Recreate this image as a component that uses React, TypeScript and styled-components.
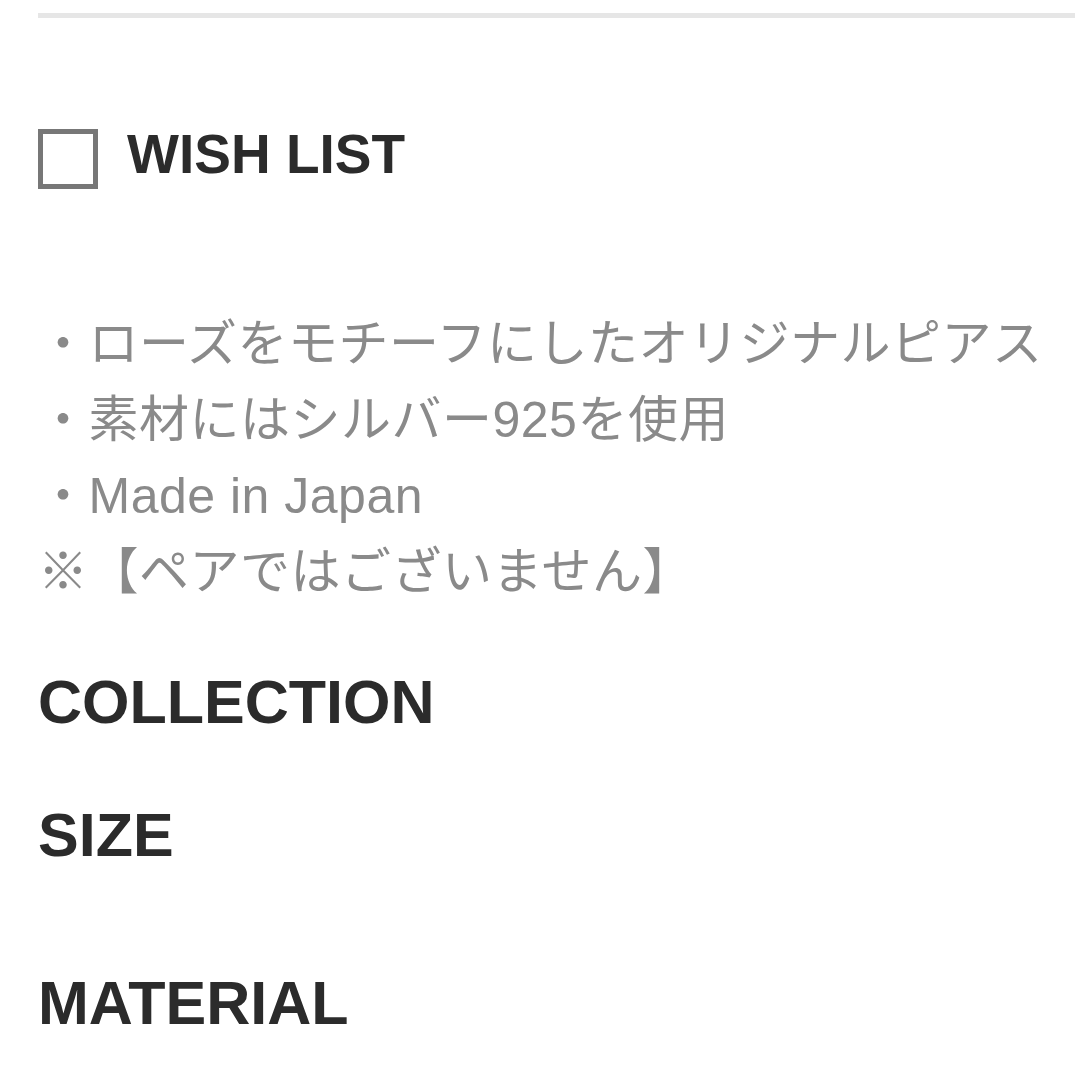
import React from "react";
import styled, { createGlobalStyle } from "styled-components";

const GlobalStyle = createGlobalStyle`
  html, body {
    margin: 0;
    padding: 0;
    background: #ffffff;
  }
  body {
    font-family: "Liberation Sans", "Noto Sans CJK JP", sans-serif;
  }
`;

const Page = styled.main`
  padding: 13px 5px 0 38px;
  display: flex;
  flex-direction: column;
`;

const Divider = styled.hr`
  margin: 0;
  border: none;
  height: 5px;
  background: #e6e6e6;
`;

const WishRow = styled.label`
  margin-top: 109px;
  display: flex;
  align-items: center;
  gap: 29px;
  cursor: pointer;
`;

const CheckBox = styled.span`
  width: 60px;
  height: 60px;
  box-sizing: border-box;
  border: 5px solid #777777;
  background: #ffffff;
  flex: none;
`;

const WishLabel = styled.span`
  font-family: "Liberation Sans", Arial, sans-serif;
  font-weight: 700;
  font-size: 55px;
  line-height: 55px;
  color: #2b2b2b;
  margin-bottom: 8px;
`;

const Description = styled.div`
  margin-top: 116px;
  display: flex;
  flex-direction: column;
`;

const DescLine = styled.p`
  margin: 0;
  font-family: "Liberation Sans", "Noto Sans CJK JP", sans-serif;
  font-size: 50px;
  line-height: 76px;
  letter-spacing: 0.5px;
  color: #8a8a8a;
  white-space: nowrap;
`;

const Heading = styled.h3<{ $gap: number }>`
  margin: ${(p) => p.$gap}px 0 0 0;
  font-family: "Liberation Sans", Arial, sans-serif;
  font-weight: 700;
  font-size: 61px;
  line-height: 60px;
  color: #2b2b2b;
`;

const lines = [
  "・ローズをモチーフにしたオリジナルピアス",
  "・素材にはシルバー925を使用",
  "・Made in Japan",
  "※【ペアではございません】",
];

export default function App() {
  return (
    <>
      <GlobalStyle />
      <Page>
        <Divider />
        <WishRow>
          <CheckBox />
          <WishLabel>WISH LIST</WishLabel>
        </WishRow>
        <Description>
          {lines.map((l) => (
            <DescLine key={l}>{l}</DescLine>
          ))}
        </Description>
        <Heading $gap={62}>COLLECTION</Heading>
        <Heading $gap={73}>SIZE</Heading>
        <Heading $gap={108}>MATERIAL</Heading>
      </Page>
    </>
  );
}
